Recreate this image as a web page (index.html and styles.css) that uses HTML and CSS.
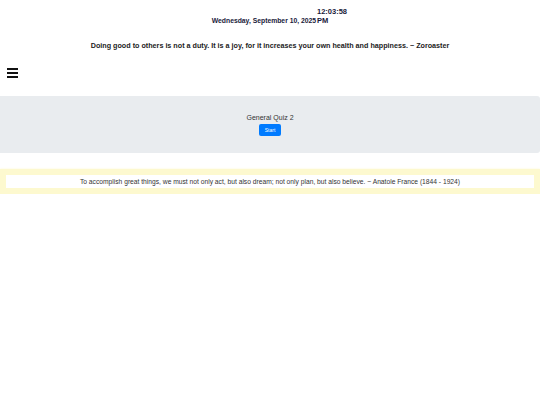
FILE: index.html
```html
<!DOCTYPE html>
<html>
<head>
<meta charset="utf-8">
<link rel="stylesheet" href="styles.css">
</head>
<body>
<header class="clock"><span class="date">Wednesday, September 10, 2025</span> <span class="time"><span class="hms">12:03:58</span>PM</span></header>
<p class="daily-quote">Doing good to others is not a duty. It is a joy, for it increases your own health and happiness. ~ Zoroaster</p>
<nav class="menu">
  <button class="hamburger" aria-label="Menu"><span></span><span></span><span></span></button>
</nav>
<section class="quiz-panel">
  <div class="quiz-title">General Quiz 2</div>
  <button class="start-btn">Start</button>
</section>
<section class="quote-box">
  <div class="quote-inner">To accomplish great things, we must not only act, but also dream; not only plan, but also believe. ~ Anatole France (1844 - 1924)</div>
</section>
</body>
</html>
```
FILE: styles.css
```css
html, body {
  margin: 0;
  padding: 0;
  background: #ffffff;
  font-family: "Liberation Sans", Arial, sans-serif;
  color: #212529;
}

.clock {
  text-align: center;
  padding-top: 7px;
  font-weight: bold;
  color: #1a1a3a;
  font-size: 3px;
}

.date {
  font-size: 6.8px;
}

.time {
  display: inline-block;
  text-align: left;
  font-size: 7.5px;
  line-height: 9px;
}

.hms {
  display: block;
  width: 0;
  white-space: nowrap;
}

.daily-quote {
  margin: 16px 0 0;
  text-align: center;
  font-size: 7.2px;
  font-weight: bold;
  color: #222;
}

.menu {
  padding: 18px 0 0 7px;
  height: 42px;
  box-sizing: border-box;
}

.hamburger {
  display: flex;
  flex-direction: column;
  gap: 2px;
  padding: 0;
  border: 0;
  background: none;
  width: 12px;
}

.hamburger span {
  display: block;
  height: 2px;
  width: 11px;
  background: #111;
}

.quiz-panel {
  margin-top: 4px;
  background: #e9ecef;
  border-radius: 0 3px 3px 0;
  height: 57px;
  display: flex;
  flex-direction: column;
  align-items: center;
  justify-content: center;
  gap: 3px;
}

.quiz-title {
  font-size: 7px;
  color: #333;
}

.start-btn {
  background: #007bff;
  color: #fff;
  border: 0;
  border-radius: 2px;
  font-family: inherit;
  font-size: 5px;
  width: 22px;
  height: 12px;
  padding: 0;
}

.quote-box {
  margin-top: 16px;
  border: 6px solid #fdf9cf;
  box-shadow: 0 0 2px #fdf9cf;
}

.quote-inner {
  background: #fff;
  text-align: center;
  font-size: 6.7px;
  line-height: 13px;
  color: #333;
}
```
